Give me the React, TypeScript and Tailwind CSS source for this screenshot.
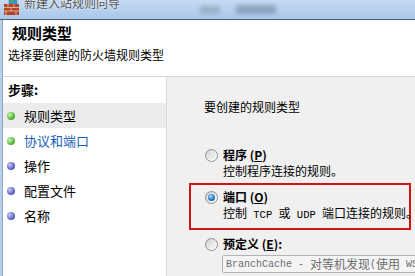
import React from "react";

function Radio({ checked }: { checked?: boolean }) {
  return (
    <div className="w-[13px] h-[13px] rounded-full border border-[#8e8f8f] bg-[linear-gradient(135deg,#c9c9c9,#f4f4f4_60%,#ffffff)] flex items-center justify-center shrink-0">
      {checked ? (
        <div className="w-[7px] h-[7px] rounded-full bg-[radial-gradient(circle_at_40%_35%,#a6dcff,#2a78c8_55%,#0d3f78)]" />
      ) : (
        <div className="w-[9px] h-[9px] rounded-full bg-[linear-gradient(135deg,#d6d6d6,#f8f8f8)]" />
      )}
    </div>
  );
}

function Bullet({ green }: { green?: boolean }) {
  return (
    <div
      className={
        green
          ? "w-[8px] h-[8px] rounded-full bg-[radial-gradient(circle_at_35%_35%,#c9f5b5,#52b83a_60%,#2f7d22)] shrink-0"
          : "w-[8px] h-[8px] rounded-full bg-[radial-gradient(circle_at_35%_35%,#c8ccf5,#5f66c8_60%,#3a3f94)] shrink-0"
      }
    />
  );
}

function Mono({ children }: { children: React.ReactNode }) {
  return <span className="text-[10.5px] font-['Liberation_Mono',monospace] whitespace-pre">{children}</span>;
}

export default function App() {
  const steps = [
    { t: "规则类型", green: true, active: true },
    { t: "协议和端口", green: true, link: true },
    { t: "操作" },
    { t: "配置文件" },
    { t: "名称" },
  ];
  return (
    <div className="w-[415px] h-[276px] overflow-hidden bg-white font-['Noto_Sans_CJK_SC',sans-serif] text-black flex flex-col">
      {/* title bar */}
      <div className="relative h-[20px] shrink-0 bg-[linear-gradient(180deg,#c6dbf1,#a9c7eb)] border-b border-[#4c5d74] flex items-start overflow-hidden">
        <svg width="17" height="16" viewBox="0 0 17 16" className="ml-[3px] -mt-[1px] shrink-0">
          <circle cx="10" cy="3" r="4.5" fill="#3f8fd0" />
          <path d="M7 1.5 Q9 0 11 2 Q10 4 8 4 Z" fill="#4bb04b" />
          <rect x="1" y="5" width="15" height="11" fill="#b2432e" />
          <path d="M1 8.5H16M1 12H16M5 5V8.5M11 5V8.5M8 8.5V12M3 12V16M13 12V16" stroke="#e8c7a0" strokeWidth="0.8" />
        </svg>
        <span className="ml-[4px] -mt-[4px] text-[12px] leading-[14px] text-[#555555] [text-shadow:0_0_3px_#ffffff]">
          新建入站规则向导
        </span>
        <div className="absolute left-[200px] top-[6px] w-[20px] h-[8px] bg-[#8fa3bb] blur-[2px] opacity-70" />
        <div className="absolute left-[236px] top-[5px] w-[40px] h-[9px] bg-[#7c8fa8] blur-[2px] opacity-70" />
      </div>

      <div className="flex-1 flex bg-[#b7cfea] pl-[2px] min-h-0">
        <div className="flex-1 flex flex-col border-l border-[#8ea6c2] min-w-0">
          {/* header */}
          <div className="h-[57px] shrink-0 bg-white border-b border-[#d6d6d6]">
            <div className="pl-[9px] pt-[3px] text-[15px] leading-[20px] font-bold">规则类型</div>
            <div className="pl-[5px] mt-[4px] text-[12px] leading-[16px]">选择要创建的防火墙规则类型</div>
          </div>

          {/* body */}
          <div className="flex-1 flex bg-[#f0f0f0] min-h-0">
            <div className="w-[164px] shrink-0 bg-white border-r border-[#d9d9d9] flex flex-col">
              <div className="h-[26px] flex items-center pl-[5px] text-[13px] font-bold">步骤:</div>
              {steps.map((s) => (
                <div
                  key={s.t}
                  className={
                    s.active
                      ? "h-[25px] flex items-center pl-[4px] bg-[#ebebeb]"
                      : "h-[25px] flex items-center pl-[4px]"
                  }
                >
                  <Bullet green={s.green} />
                  <span
                    className={
                      s.link
                        ? "ml-[9px] text-[13px] leading-[16px] text-[#1a5fb4]"
                        : "ml-[9px] text-[13px] leading-[16px]"
                    }
                  >
                    {s.t}
                  </span>
                </div>
              ))}
            </div>

            <div className="flex-1 min-w-0 overflow-hidden pl-[22px] pr-[3px]">
              <div className="pt-[22px] pl-[15px] text-[12px] leading-[16px]">要创建的规则类型</div>

              <div className="mt-[32px] pl-[16px]">
                <div className="flex items-center h-[16px]">
                  <Radio />
                  <span className="ml-[5px] text-[12px] font-bold">
                    程序 (<span className="underline">P</span>)
                  </span>
                </div>
                <div className="pl-[18px] text-[12px] leading-[16px]">控制程序连接的规则。</div>
              </div>

              <div className="mt-[4px] w-[222px] border-2 border-[#d21414] pl-[14px] pt-[4px] pb-[5px]">
                <div className="flex items-center h-[16px]">
                  <Radio checked />
                  <span className="ml-[5px] text-[12px] font-bold">
                    端口 (<span className="underline">O</span>)
                  </span>
                </div>
                <div className="pl-[18px] text-[12px] leading-[16px] whitespace-nowrap">
                  控制<Mono> TCP </Mono>或<Mono> UDP </Mono>端口连接的规则。
                </div>
              </div>

              <div className="mt-[6px] pl-[16px]">
                <div className="flex items-center h-[16px]">
                  <Radio />
                  <span className="ml-[5px] text-[12px] font-bold">
                    预定义 (<span className="underline">E</span>):
                  </span>
                </div>
                <div className="ml-[17px] mt-[3px] w-[240px] h-[18px] border border-[#b4b4b4] rounded-[2px] bg-[#f4f4f4] flex items-center pl-[3px] whitespace-nowrap overflow-hidden text-[#6d6d6d]">
                  <span className="text-[10px] font-['Liberation_Mono',monospace] whitespace-pre">BranchCache - </span>
                  <span className="text-[12px]">对等机发现</span>
                  <span className="text-[10px] font-['Liberation_Mono',monospace] whitespace-pre">(</span>
                  <span className="text-[12px]">使用</span>
                  <span className="text-[10px] font-['Liberation_Mono',monospace] whitespace-pre"> WSD)</span>
                </div>
                <div className="pl-[18px] mt-[1px] text-[12px] leading-[16px] whitespace-nowrap">
                  控制<Mono> Windows </Mono>体验功能连接的规则。
                </div>
              </div>
            </div>
          </div>
        </div>
      </div>
    </div>
  );
}
